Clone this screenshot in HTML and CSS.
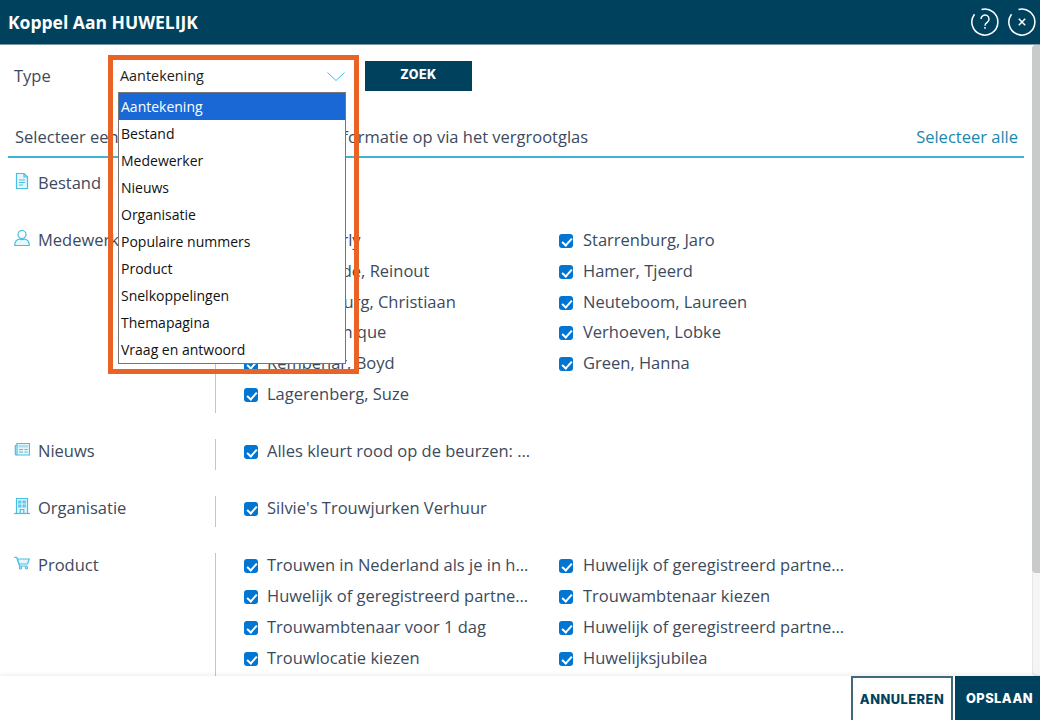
FILE: index.html
```html
<!DOCTYPE html>
<html lang="nl">
<head>
    <meta charset="UTF-8">
    <title>Koppel Aan HUWELIJK</title>
    <link rel="stylesheet" href="styles.css">
</head>
<body>
    <div class="dialog">
        <div class="dialog-header">
            <h1>Koppel Aan HUWELIJK</h1>
            <div class="header-icons">
                <svg class="round-icon" viewBox="0 0 28 28"><path d="M10.500 1.500A13 13 0 1 1 3.500 6.200"/><path d="M10 11a4 4 0 1 1 6.200 3.300c-1.500 1-2.200 1.800-2.200 3.400"/><path d="M14 19v1.700"/></svg>
                <svg class="round-icon" viewBox="0 0 28 28"><path d="M10.500 1.500A13 13 0 1 1 3.500 6.200"/><path d="M10.800 10.800l6.400 6.400M17.200 10.800l-6.400 6.400"/></svg>
            </div>
        </div>

        <div class="dialog-main">
            <div class="content">
                <div class="search-row">
                    <span class="type-label">Type</span>
                    <div class="select-box">
                        <span>Aantekening</span>
                        <svg class="chevron" viewBox="0 0 18 9"><path d="M0.500 0.500L9 8.500L17.500 0.500"/></svg>
                    </div>
                    <button class="btn-zoek" type="button">ZOEK</button>
                </div>

                <div class="hint-row">
                    <span>Selecteer een koppeling of vraag nadere informatie op via het vergrootglas</span>
                    <a class="select-all">Selecteer alle</a>
                </div>

                <div class="group">
                    <div class="group-name">
                        <svg class="group-icon" viewBox="0 0 16 18"><path class="tint" d="M2.500 0.500h7.500l3.500 3.500V15.500H2.500z"/><path d="M10 0.500V4h3.500"/><path d="M5 7h6M5 9.500h6M5 12h4"/></svg>
                        Bestand
                    </div>
                    <div class="group-items"></div>
                </div>

                <div class="group">
                    <div class="group-name">
                        <svg class="group-icon" viewBox="0 0 16 18"><circle cx="8" cy="4.500" r="4"/><path class="tint" d="M0.700 15.500c0-3.800 2.500-6 4.800-6.500 1.500.8 3.500.8 5 0 2.300.5 4.800 2.700 4.800 6.500z"/></svg>
                        Medewerker
                    </div>
                    <div class="group-items">
                        <label class="item"><span class="check"></span>Bos, Beverly</label>
                        <label class="item"><span class="check"></span>Starrenburg, Jaro</label>
                        <label class="item"><span class="check"></span>van de Ende, Reinout</label>
                        <label class="item"><span class="check"></span>Hamer, Tjeerd</label>
                        <label class="item"><span class="check"></span>Schonenburg, Christiaan</label>
                        <label class="item"><span class="check"></span>Neuteboom, Laureen</label>
                        <label class="item"><span class="check"></span>Smits, Monique</label>
                        <label class="item"><span class="check"></span>Verhoeven, Lobke</label>
                        <label class="item"><span class="check"></span>Rembenar, Boyd</label>
                        <label class="item"><span class="check"></span>Green, Hanna</label>
                        <label class="item"><span class="check"></span>Lagerenberg, Suze</label>
                    </div>
                </div>

                <div class="group">
                    <div class="group-name">
                        <svg class="group-icon" viewBox="0 0 16 18"><path class="tint" d="M3 2.500h12.500v11.500H3z"/><path d="M3 4.500H1.300V13c0 .6.400 1 1 1H3"/><path class="filled" d="M4.500 4h9.500v2.500H4.500z"/><path d="M5 8.500h4M5 11h4M10.500 8.500h3M10.500 11h3"/></svg>
                        Nieuws
                    </div>
                    <div class="group-items">
                        <label class="item"><span class="check"></span><span class="item-text">Alles kleurt rood op de beurzen: AEX zakt verder weg</span></label>
                    </div>
                </div>

                <div class="group">
                    <div class="group-name">
                        <svg class="group-icon" viewBox="0 0 16 18"><path class="tint" d="M2.500 15.500V0.500h11v15"/><path d="M0 15.500h16"/><path d="M4.800 3h2v2h-2zM9.200 3h2v2h-2zM4.800 7h2v2h-2zM9.200 7h2v2h-2zM6.200 15.500v-4h3.600v4"/></svg>
                        Organisatie
                    </div>
                    <div class="group-items">
                        <label class="item"><span class="check"></span>Silvie's Trouwjurken Verhuur</label>
                    </div>
                </div>

                <div class="group">
                    <div class="group-name">
                        <svg class="group-icon" viewBox="0 0 16 18"><path d="M0.300 2.300h2.400l2.800 8.700h7.700"/><path class="tint" d="M3.500 4h11.800l-1.800 5H5.100z"/><circle cx="6.500" cy="12.800" r="1.200"/><circle cx="12.500" cy="12.800" r="1.200"/></svg>
                        Product
                    </div>
                    <div class="group-items product-items">
                        <label class="item"><span class="check"></span><span class="item-text">Trouwen in Nederland als je in het buitenland woont</span></label>
                        <label class="item"><span class="check"></span><span class="item-text">Huwelijk of geregistreerd partnerschap aangaan</span></label>
                        <label class="item"><span class="check"></span><span class="item-text">Huwelijk of geregistreerd partnerschap beëindigen</span></label>
                        <label class="item"><span class="check"></span>Trouwambtenaar kiezen</label>
                        <label class="item"><span class="check"></span>Trouwambtenaar voor 1 dag</label>
                        <label class="item"><span class="check"></span><span class="item-text">Huwelijk of geregistreerd partnerschap omzetten</span></label>
                        <label class="item"><span class="check"></span>Trouwlocatie kiezen</label>
                        <label class="item"><span class="check"></span>Huwelijksjubilea</label>
                    </div>
                </div>

                <ul class="dropdown">
                    <li class="active">Aantekening</li>
                    <li>Bestand</li>
                    <li>Medewerker</li>
                    <li>Nieuws</li>
                    <li>Organisatie</li>
                    <li>Populaire nummers</li>
                    <li>Product</li>
                    <li>Snelkoppelingen</li>
                    <li>Themapagina</li>
                    <li>Vraag en antwoord</li>
                </ul>
                <div class="highlight"></div>
            </div>
            <div class="scrollbar"><div class="scroll-thumb"></div></div>
        </div>

        <div class="dialog-footer">
            <button class="btn-cancel" type="button">ANNULEREN</button>
            <button class="btn-save" type="button">OPSLAAN</button>
        </div>
    </div>
</body>
</html>
```

FILE: styles.css
```css
:root {
    --navy: #00425e;
    --cyan: #3cb4d8;
    --text-color: #3c4a5e;
}

* {
    box-sizing: border-box;
    margin: 0;
    padding: 0;
}

html, body {
    height: 100%;
    overflow: hidden;
}

body {
    font-family: 'Open Sans', sans-serif;
    font-size: 16.500px;
    color: var(--text-color);
    background: white;
}

.dialog {
    height: 720px;
    display: flex;
    flex-direction: column;
}

.dialog-header {
    height: 45px;
    flex: none;
    background: var(--navy);
    border-bottom: 1px solid #7c9aa8;
    display: flex;
    align-items: center;
    justify-content: space-between;
    padding: 0 4px 0 8px;
}

.dialog-header h1 {
    font-size: 17.500px;
    font-weight: 700;
    color: white;
}

.header-icons {
    display: flex;
    gap: 9px;
}

.round-icon {
    width: 28px;
    height: 28px;
    fill: none;
    stroke: white;
    stroke-width: 1.500;
}

.dialog-main {
    flex: 1;
    min-height: 0;
    display: flex;
    overflow: hidden;
}

.content {
    position: relative;
    flex: 1;
    padding: 0 8px;
    overflow: hidden;
}

.search-row {
    height: 62px;
    display: flex;
    align-items: flex-start;
}

.type-label {
    width: 112px;
    margin-top: 20px;
    padding-left: 6px;
    line-height: 22px;
}

.select-box {
    width: 225px;
    height: 30px;
    margin-top: 16px;
    padding-bottom: 2px;
    display: flex;
    align-items: center;
    justify-content: space-between;
    font-size: 14.400px;
    color: #222;
}

.chevron {
    width: 18px;
    height: 9px;
    margin-top: 2px;
    fill: none;
    stroke: #3cc0dc;
    stroke-width: 1;
}

.btn-zoek {
    width: 107px;
    height: 30px;
    margin-top: 16px;
    margin-left: 20px;
    padding-bottom: 3px;
    border: none;
    background: var(--navy);
    color: white;
    font-family: 'Inter', sans-serif;
    font-size: 12.500px;
    font-weight: 800;
    letter-spacing: 0.500px;
}

.hint-row {
    height: 51px;
    margin-bottom: 13px;
    padding: 18px 6px 0 7px;
    border-bottom: 2px solid var(--cyan);
    display: flex;
    justify-content: space-between;
    line-height: 24px;
}

.select-all {
    color: #1a88ad;
}

.group {
    display: flex;
    margin-bottom: 26px;
}

.group-name {
    width: 207px;
    height: 31px;
    padding-left: 6px;
    display: flex;
    align-items: flex-start;
    gap: 8px;
    line-height: 24px;
}

.group-icon {
    width: 16px;
    height: 18px;
    margin-top: 2px;
    flex: none;
    fill: none;
    stroke: #47bfe3;
    stroke-width: 1.200;
}

.group-icon .tint {
    fill: #e6f7fc;
}

.group-icon .filled {
    fill: #a8e0f0;
    stroke: none;
}

.group-items {
    flex: 1;
    min-height: 31px;
    padding-left: 28px;
    border-left: 1px solid #c4c4c4;
    display: grid;
    grid-template-columns: 315px 300px;
    grid-auto-rows: 30.800px;
    align-content: start;
}

.product-items {
    grid-auto-rows: 31px;
}

.item {
    display: flex;
    align-items: flex-start;
    gap: 9px;
    line-height: 24px;
    color: var(--text-color);
}

.item:nth-child(even) {
    gap: 10px;
}

.item-text {
    width: 264px;
    white-space: nowrap;
    overflow: hidden;
    text-overflow: ellipsis;
}

.check {
    position: relative;
    width: 14px;
    height: 14px;
    margin-top: 6px;
    flex: none;
    background: #0075d2;
    border-radius: 3px;
}

.check::after {
    content: "";
    position: absolute;
    left: 5px;
    top: 2px;
    width: 4px;
    height: 8px;
    border: solid white;
    border-width: 0 2px 2px 0;
    transform: rotate(42deg);
}

.dropdown {
    position: absolute;
    left: 118px;
    top: 47px;
    width: 228px;
    list-style: none;
    background: white;
    border: 1px solid #767676;
    font-size: 14px;
    color: #111;
}

.dropdown li {
    height: 27px;
    line-height: 27px;
    padding-left: 2px;
}

.dropdown li.active {
    background: #1a68d6;
    color: white;
}

.highlight {
    position: absolute;
    left: 108px;
    top: 10px;
    width: 251px;
    height: 319px;
    border: 5px solid #e96325;
}

.scrollbar {
    width: 8px;
    flex: none;
    background: #f5f5f5;
    border: solid #e6e6e6;
    border-width: 0 0 1px 1px;
    border-radius: 4px 0 0 4px;
}

.scroll-thumb {
    height: 528px;
    margin-left: -1px;
    background: #c9cbcb;
    border-radius: 4px 0 0 4px;
}

.dialog-footer {
    height: 44px;
    flex: none;
    display: flex;
    justify-content: flex-end;
    gap: 2px;
    box-shadow: 0 -2px 4px rgba(0, 0, 0, 0.06);
    position: relative;
}

.dialog-footer button {
    height: 44px;
    font-family: 'Inter', sans-serif;
    font-size: 12.800px;
    font-weight: 800;
    letter-spacing: 0.500px;
}

.btn-cancel {
    width: 102px;
    background: white;
    color: var(--navy);
    border: 2px solid #3f6a7d;
    border-bottom: none;
}

.btn-save {
    width: 85px;
    padding-left: 4px;
    background: var(--navy);
    color: white;
    border: none;
}
```
